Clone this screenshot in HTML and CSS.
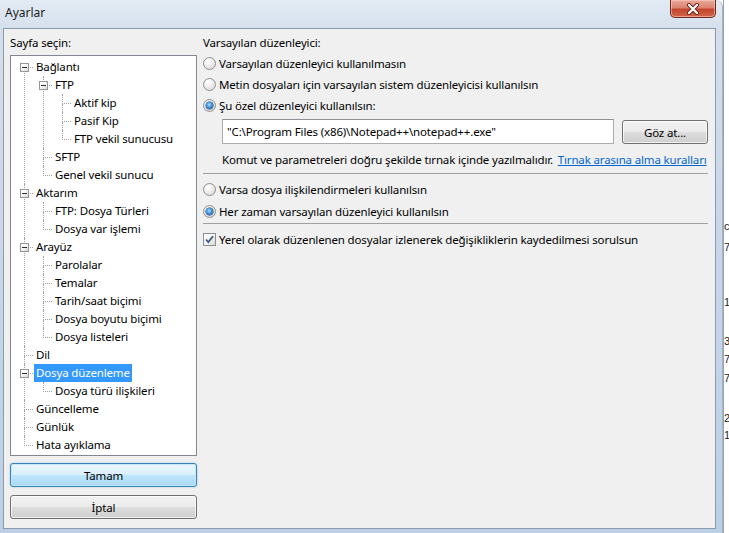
FILE: index.html
```html
<!DOCTYPE html>
<html lang="tr">
<head>
    <meta charset="UTF-8">
    <title>Ayarlar</title>
    <link rel="stylesheet" href="styles.css">
</head>
<body>
    <div class="screen">
        <div class="window">
            <div class="titlebar">
                <span class="title">Ayarlar</span>
                <div class="close">
                    <svg width="14" height="12" viewBox="0 0 14 12">
                        <path d="M3 2 L11 10 M11 2 L3 10" stroke="#6a2418" stroke-width="4" stroke-linecap="round"/>
                        <path d="M3 2 L11 10 M11 2 L3 10" stroke="#ffffff" stroke-width="2.2" stroke-linecap="round"/>
                    </svg>
                </div>
            </div>

            <div class="client">
                <div class="left">
                    <div class="label">Sayfa seçin:</div>
                    <div class="treebox">
                        <ul class="tree">
                            <li><span class="exp"></span><span class="node">Bağlantı</span>
                                <ul>
                                    <li><span class="exp"></span><span class="node">FTP</span>
                                        <ul>
                                            <li><span class="node">Aktif kip</span></li>
                                            <li><span class="node">Pasif Kip</span></li>
                                            <li><span class="node">FTP vekil sunucusu</span></li>
                                        </ul>
                                    </li>
                                    <li><span class="node">SFTP</span></li>
                                    <li><span class="node">Genel vekil sunucu</span></li>
                                </ul>
                            </li>
                            <li><span class="exp"></span><span class="node">Aktarım</span>
                                <ul>
                                    <li><span class="node">FTP: Dosya Türleri</span></li>
                                    <li><span class="node">Dosya var işlemi</span></li>
                                </ul>
                            </li>
                            <li><span class="exp"></span><span class="node">Arayüz</span>
                                <ul>
                                    <li><span class="node">Parolalar</span></li>
                                    <li><span class="node">Temalar</span></li>
                                    <li><span class="node">Tarih/saat biçimi</span></li>
                                    <li><span class="node">Dosya boyutu biçimi</span></li>
                                    <li><span class="node">Dosya listeleri</span></li>
                                </ul>
                            </li>
                            <li><span class="node">Dil</span></li>
                            <li><span class="exp"></span><span class="node selected">Dosya düzenleme</span>
                                <ul>
                                    <li><span class="node">Dosya türü ilişkileri</span></li>
                                </ul>
                            </li>
                            <li><span class="node">Güncelleme</span></li>
                            <li><span class="node">Günlük</span></li>
                            <li><span class="node">Hata ayıklama</span></li>
                        </ul>
                    </div>
                    <div class="btn default">Tamam</div>
                    <div class="btn cancel">İptal</div>
                </div>

                <div class="right">
                    <div class="label">Varsayılan düzenleyici:</div>
                    <div class="group first">
                        <div class="opt"><span class="radio"></span>Varsayılan düzenleyici kullanılmasın</div>
                        <div class="opt"><span class="radio"></span>Metin dosyaları için varsayılan sistem düzenleyicisi kullanılsın</div>
                        <div class="opt"><span class="radio on"></span>Şu özel düzenleyici kullanılsın:</div>
                    </div>
                    <div class="pathrow">
                        <div class="textbox">"C:\Program Files (x86)\Notepad++\notepad++.exe"</div>
                        <div class="btn browse">Göz at...</div>
                    </div>
                    <div class="hint">Komut ve parametreleri doğru şekilde tırnak içinde yazılmalıdır. <a class="link">Tırnak arasına alma kuralları</a></div>
                    <div class="sep"></div>
                    <div class="group second">
                        <div class="opt"><span class="radio"></span>Varsa dosya ilişkilendirmeleri kullanılsın</div>
                        <div class="opt"><span class="radio on"></span>Her zaman varsayılan düzenleyici kullanılsın</div>
                    </div>
                    <div class="sep"></div>
                    <div class="opt check-row"><span class="check">
                        <svg width="11" height="11" viewBox="0 0 11 11">
                            <path d="M2 5.5 L4.3 8 L9 2.2" fill="none" stroke="#3b5a8c" stroke-width="1.8"/>
                        </svg>
                    </span>Yerel olarak düzenlenen dosyalar izlenerek değişikliklerin kaydedilmesi sorulsun</div>
                </div>
            </div>
        </div>

        <div class="behind">
            <span class="frag" style="top:219px">c</span>
            <span class="frag" style="top:240px">7</span>
            <span class="frag" style="top:295px">1</span>
            <span class="frag" style="top:334px">3</span>
            <span class="frag" style="top:352px">7</span>
            <span class="frag" style="top:371px">7</span>
            <span class="frag" style="top:411px">2</span>
            <span class="frag" style="top:428px">1</span>
        </div>
    </div>
</body>
</html>
```

FILE: styles.css
```css
body {
    margin: 0;
    background: #ffffff;
    font-family: "Noto Sans", "Liberation Sans", sans-serif;
    font-size: 11.5px;
    letter-spacing: -0.15px;
    color: #000;
}

.screen {
    display: flex;
    width: 729px;
    height: 533px;
    overflow: hidden;
}

.window {
    width: 723px;
    height: 533px;
    box-sizing: border-box;
    padding: 0 6px 4px 3px;
    display: flex;
    flex-direction: column;
    background: linear-gradient(180deg, #e3ebf4 0%, #d3dfec 6%, #c8d8e9 40%, #bcd0e5 100%);
    border-top-right-radius: 7px;
    border-right: 1px solid #a3b3c4;
}

.titlebar {
    height: 28px;
    display: flex;
    align-items: flex-start;
    flex-shrink: 0;
}

.title {
    padding: 4px 0 0 2px;
    font-size: 12px;
    letter-spacing: 0;
    color: #1b1b1b;
}

.close {
    margin-left: auto;
    width: 46px;
    height: 18px;
    box-sizing: border-box;
    border: 1px solid #70291d;
    border-top: none;
    border-radius: 0 0 5px 5px;
    background: linear-gradient(180deg, #e9a99a 0%, #dc8470 45%, #c4452d 55%, #d0644a 100%);
    box-shadow: inset 0 0 0 1px rgba(255, 210, 200, 0.55);
    display: flex;
    align-items: center;
    justify-content: center;
}

.client {
    flex: 1;
    display: flex;
    background: #f0f0f0;
    border: 1px solid #8c9aab;
    padding: 6px 7px 8px 6px;
}

.left {
    width: 188px;
    display: flex;
    flex-direction: column;
}

.label {
    height: 15px;
    line-height: 15px;
}

.treebox {
    margin-top: 5px;
    height: 401px;
    box-sizing: border-box;
    border: 1px solid #828790;
    background: #fff;
    overflow: hidden;
}

.tree,
.tree ul {
    list-style: none;
    margin: 0;
    padding: 0;
}

.tree {
    padding: 2px 0 0 13px;
}

.tree ul {
    padding-left: 9px;
}

.tree li {
    position: relative;
    padding-left: 10px;
}

.tree li::before {
    content: "";
    position: absolute;
    left: 0;
    top: 0;
    width: 8px;
    height: 9px;
    border-left: 1px dotted #a0a0a0;
    border-bottom: 1px dotted #a0a0a0;
}

.tree li::after {
    content: "";
    position: absolute;
    left: 0;
    top: 10px;
    bottom: 0;
    border-left: 1px dotted #a0a0a0;
}

.tree li:last-child::after {
    display: none;
}

.tree > li:first-child::before {
    border-left: none;
    left: 1px;
}

.node {
    display: inline-block;
    height: 18px;
    line-height: 18px;
    padding: 0 2px;
    white-space: nowrap;
}

.node.selected {
    background: #3399ff;
    color: #fff;
}

.exp {
    position: absolute;
    left: -4px;
    top: 5px;
    width: 9px;
    height: 9px;
    box-sizing: border-box;
    border: 1px solid #969696;
    background: linear-gradient(135deg, #ffffff 30%, #d9d9d9 100%);
    z-index: 1;
}

.exp::after {
    content: "";
    position: absolute;
    left: 1px;
    top: 3px;
    width: 5px;
    height: 1px;
    background: #2b2b2b;
}

.btn {
    height: 24px;
    box-sizing: border-box;
    border: 1px solid #707070;
    border-radius: 3px;
    background: linear-gradient(180deg, #f2f2f2 0%, #ebebeb 48%, #dddddd 52%, #cfcfcf 100%);
    box-shadow: inset 0 0 0 1px rgba(255, 255, 255, 0.7);
    display: flex;
    align-items: center;
    justify-content: center;
}

.btn.default {
    margin-top: 7px;
    border-color: #3c7fb1;
    background: linear-gradient(180deg, #eaf6fd 0%, #d9f0fc 48%, #bee6fd 52%, #a7d9f5 100%);
    box-shadow: inset 0 0 0 1px #c5e9fc, 0 0 2px rgba(60, 160, 220, 0.5);
}

.btn.cancel {
    margin-top: 8px;
}

.right {
    flex: 1;
    margin-left: 6px;
    display: flex;
    flex-direction: column;
}

.opt {
    display: flex;
    align-items: center;
    white-space: nowrap;
}

.group.first {
    margin-top: 3px;
}

.group.first .opt {
    height: 21px;
}

.group.second {
    margin-top: 4px;
}

.group.second .opt {
    height: 22px;
}

.radio {
    width: 13px;
    height: 13px;
    box-sizing: border-box;
    margin-right: 3px;
    border: 1px solid #8e8f8f;
    border-radius: 50%;
    background: radial-gradient(circle at 35% 30%, #ffffff 0%, #f0f0f0 40%, #d2d2d2 100%);
    display: flex;
    align-items: center;
    justify-content: center;
    flex-shrink: 0;
}

.radio.on::after {
    content: "";
    width: 7px;
    height: 7px;
    border-radius: 50%;
    background: radial-gradient(circle at 45% 40%, #b7e4fb 0%, #3d94dc 45%, #13427f 100%);
    box-shadow: 0 0 0 0.5px #1a3f6e;
}

.pathrow {
    margin-top: 3px;
    padding-left: 19px;
    display: flex;
    align-items: flex-start;
}

.textbox {
    width: 392px;
    height: 25px;
    box-sizing: border-box;
    border: 1px solid #abadb3;
    border-top-color: #8e9096;
    background: #fff;
    padding-left: 4px;
    line-height: 23px;
    white-space: nowrap;
}

.btn.browse {
    width: 86px;
    margin-left: 8px;
    margin-top: 1px;
}

.hint {
    margin-top: 8px;
    padding-left: 19px;
    height: 15px;
    line-height: 15px;
    white-space: nowrap;
}

.link {
    margin-left: 2px;
    color: #0066cc;
    text-decoration: underline;
}

.sep {
    margin-top: 6px;
    height: 0;
    border-top: 1px solid #a0a0a0;
}

.group.second + .sep {
    margin-top: 1px;
}

.check-row {
    margin-top: 5px;
    height: 21px;
}

.check {
    width: 13px;
    height: 13px;
    box-sizing: border-box;
    margin-right: 3px;
    border: 1px solid #8e8f8f;
    background: linear-gradient(135deg, #ffffff 20%, #dcdcdc 100%);
    display: flex;
    align-items: center;
    justify-content: center;
    flex-shrink: 0;
}

.behind {
    position: relative;
    flex: 1;
    background: #ffffff;
    border-left: 1px solid #9aa4ae;
}

.frag {
    position: absolute;
    left: 0;
    font-family: "Liberation Sans", sans-serif;
    font-size: 11px;
    letter-spacing: 0;
    line-height: 14px;
    color: #222;
}
```
